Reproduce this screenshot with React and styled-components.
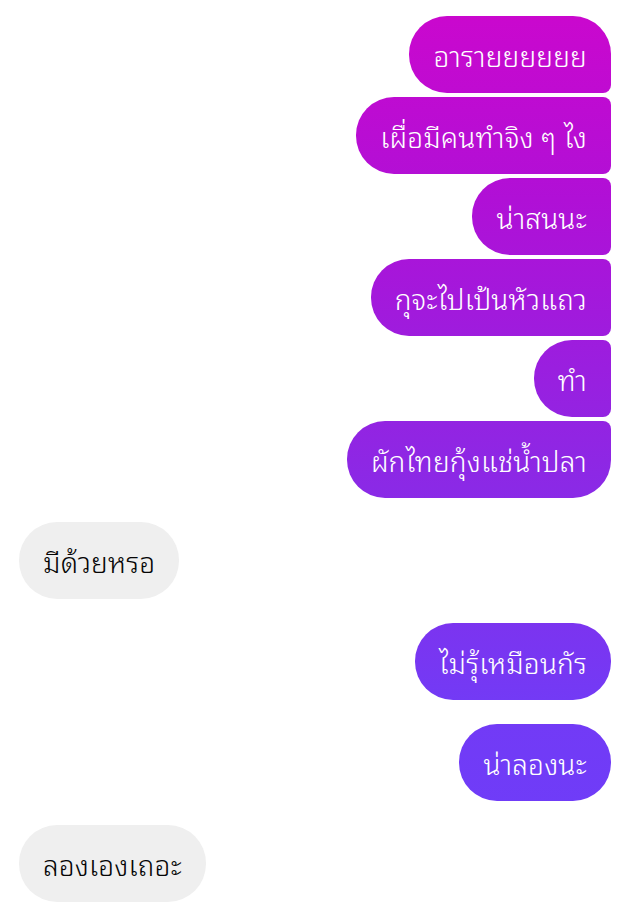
import React from "react";
import styled, { createGlobalStyle, css } from "styled-components";

const Global = createGlobalStyle`
  html, body { margin: 0; padding: 0; background: #ffffff; }
  body { font-family: "Noto Sans Thai Looped", "Noto Sans Thai", "Noto Sans", sans-serif; }
`;

const Thread = styled.div`
  display: flex;
  flex-direction: column;
  padding: 16px 16px 12px 19px;
  gap: 24px;
`;

const Group = styled.div`
  display: flex;
  flex-direction: column;
  align-items: ${(p) => (p.$mine ? "flex-end" : "flex-start")};
  gap: 4px;
`;

const BIG = 38;
const SMALL = 8;

const Bubble = styled.div`
  box-sizing: border-box;
  height: 77px;
  display: flex;
  align-items: center;
  padding: 0 24px;
  font-size: 28px;
  font-weight: 300;
  letter-spacing: 0.2px;
  line-height: 1;
  white-space: nowrap;
  ${(p) =>
    p.$mine
      ? css`
          color: #ffffff;
          background: linear-gradient(
            180deg,
            #cc07cd 0px,
            #b010d6 200px,
            #8e27e4 460px,
            #733af5 700px,
            #6b3efb 914px
          );
          background-attachment: fixed;
          border-radius: ${BIG}px ${p.$pos === "first" || p.$pos === "single" ? BIG : SMALL}px
            ${p.$pos === "last" || p.$pos === "single" ? BIG : SMALL}px ${BIG}px;
        `
      : css`
          color: #050505;
          background: #efefef;
          border-radius: ${BIG}px;
        `}
`;

const groups = [
  {
    mine: true,
    msgs: [
      "อารายยยยยย",
      "เผื่อมีคนทำจิง ๆ ไง",
      "น่าสนนะ",
      "กุจะไปเป้นหัวแถว",
      "ทำ",
      "ผักไทยกุ้งแช่น้ำปลา",
    ],
  },
  { mine: false, msgs: ["มีด้วยหรอ"] },
  { mine: true, msgs: ["ไม่รุ้เหมือนกัร"] },
  { mine: true, msgs: ["น่าลองนะ"] },
  { mine: false, msgs: ["ลองเองเถอะ"] },
];

const posOf = (i, n) =>
  n === 1 ? "single" : i === 0 ? "first" : i === n - 1 ? "last" : "middle";

export default function App() {
  return (
    <>
      <Global />
      <Thread>
        {groups.map((g, gi) => (
          <Group key={gi} $mine={g.mine}>
            {g.msgs.map((m, i) => (
              <Bubble key={i} $mine={g.mine} $pos={posOf(i, g.msgs.length)}>
                {m}
              </Bubble>
            ))}
          </Group>
        ))}
      </Thread>
    </>
  );
}
